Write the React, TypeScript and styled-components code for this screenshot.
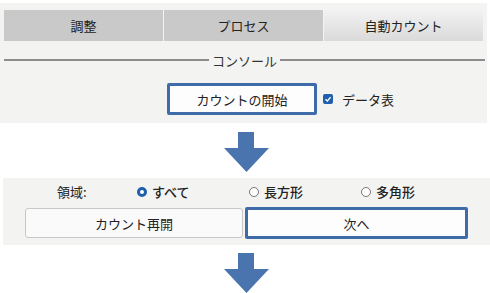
import React from 'react';
import styled, { createGlobalStyle } from 'styled-components';

const GlobalStyle = createGlobalStyle`
  html, body {
    margin: 0;
    padding: 0;
    background: #ffffff;
  }
  body {
    font-family: "Noto Sans CJK JP", "Noto Sans", sans-serif;
    color: #222;
  }
`;

const TABS = ['調整', 'プロセス', '自動カウント'];
const AREAS = [
  { label: 'すべて', checked: true },
  { label: '長方形', checked: false },
  { label: '多角形', checked: false },
];

const ArrowDown = () => (
  <svg width="46" height="41" viewBox="0 0 46 41">
    <path d="M14 0 H30 V16 H45 L22.5 40 L0 16 H14 Z" fill="#4a74ae" />
  </svg>
);

const App = () => {
  return (
    <Page>
      <GlobalStyle />
      <ConsolePanel>
        <TabBar>
          {TABS.map((tab, index) => (
            <Tab key={tab} active={index === TABS.length - 1}>
              {tab}
            </Tab>
          ))}
        </TabBar>
        <Separator>
          <span>コンソール</span>
        </Separator>
        <ControlRow>
          <PrimaryButton width="150px">カウントの開始</PrimaryButton>
          <CheckLabel>
            <CheckBox>
              <svg width="8" height="8" viewBox="0 0 8 8">
                <path d="M1.5 4.2 L3.3 6 L6.6 2.2" stroke="#fff" strokeWidth="1.3" fill="none" />
              </svg>
            </CheckBox>
            データ表
          </CheckLabel>
        </ControlRow>
      </ConsolePanel>
      <ArrowSlot>
        <ArrowDown />
      </ArrowSlot>
      <AreaPanel>
        <RadioRow>
          <AreaLabel>領域:</AreaLabel>
          {AREAS.map((area) => (
            <RadioOption key={area.label}>
              <RadioDot checked={area.checked} />
              {area.label}
            </RadioOption>
          ))}
        </RadioRow>
        <ButtonRow>
          <PlainButton>カウント再開</PlainButton>
          <PrimaryButton width="223px">次へ</PrimaryButton>
        </ButtonRow>
      </AreaPanel>
      <ArrowSlot bottom>
        <ArrowDown />
      </ArrowSlot>
    </Page>
  );
};

export default App;

const Page = styled.div`
  width: 490px;
  height: 293px;
  overflow: hidden;
  display: flex;
  flex-direction: column;
  padding-top: 3px;
  box-sizing: border-box;
`;

const ConsolePanel = styled.div`
  width: 487px;
  height: 120px;
  background: #f3f3f1;
  display: flex;
  flex-direction: column;
  padding: 7px 2px 0 4px;
  box-sizing: border-box;
`;

const TabBar = styled.div`
  display: flex;
  gap: 1px;
  height: 31px;
`;

const Tab = styled.div<{ active?: boolean }>`
  width: 159px;
  display: flex;
  align-items: center;
  justify-content: center;
  font-size: 13px;
  color: #222;
  background: ${(p) =>
    p.active ? 'linear-gradient(#f2f2f2, #dadada)' : '#c9c9c9'};
`;

const Separator = styled.div`
  display: flex;
  align-items: center;
  gap: 3px;
  margin-top: 9px;
  height: 20px;
  font-size: 13px;
  color: #333;
  &::before,
  &::after {
    content: '';
    flex: 1;
    height: 2px;
    background: #8c8c8c;
  }
`;

const ControlRow = styled.div`
  display: flex;
  align-items: center;
  margin-top: 13px;
  padding-left: 163px;
  gap: 6px;
`;

const PrimaryButton = styled.div<{ width: string }>`
  width: ${(p) => p.width};
  height: 32px;
  box-sizing: border-box;
  border: 3px solid #3f6ca8;
  border-radius: 2px;
  background: #fdfdfd;
  display: flex;
  align-items: center;
  justify-content: center;
  font-size: 13px;
  color: #222;
`;

const CheckLabel = styled.div`
  display: flex;
  align-items: center;
  gap: 9px;
  font-size: 13px;
  color: #222;
`;

const CheckBox = styled.span`
  width: 10px;
  height: 10px;
  border-radius: 2px;
  background: #1f5fae;
  display: flex;
  align-items: center;
  justify-content: center;
`;

const ArrowSlot = styled.div<{ bottom?: boolean }>`
  display: flex;
  justify-content: center;
  padding-left: 4px;
  padding-top: ${(p) => (p.bottom ? '8px' : '9px')};
  height: ${(p) => (p.bottom ? '48px' : '55px')};
  box-sizing: border-box;
`;

const AreaPanel = styled.div`
  margin-left: 3px;
  width: 487px;
  height: 67px;
  background: #f3f3f1;
  display: flex;
  flex-direction: column;
  padding: 5px 0 0 22px;
  box-sizing: border-box;
`;

const RadioRow = styled.div`
  display: flex;
  align-items: center;
  height: 17px;
  font-size: 13px;
  color: #222;
`;

const AreaLabel = styled.span`
  width: 80px;
  padding-left: 32px;
`;

const RadioOption = styled.span`
  width: 112px;
  display: flex;
  align-items: center;
  gap: 5px;
  font-weight: 500;
`;

const RadioDot = styled.span<{ checked?: boolean }>`
  width: 10px;
  height: 10px;
  box-sizing: border-box;
  border-radius: 50%;
  background: #fff;
  border: ${(p) => (p.checked ? '3px solid #1f5fae' : '1px solid #777')};
`;

const ButtonRow = styled.div`
  display: flex;
  gap: 2px;
  margin-top: 7px;
  align-items: center;
`;

const PlainButton = styled.div`
  width: 218px;
  height: 30px;
  box-sizing: border-box;
  border: 1px solid #c8c8c8;
  border-radius: 3px;
  background: #fafafa;
  display: flex;
  align-items: center;
  justify-content: center;
  font-size: 13px;
  color: #222;
`;
